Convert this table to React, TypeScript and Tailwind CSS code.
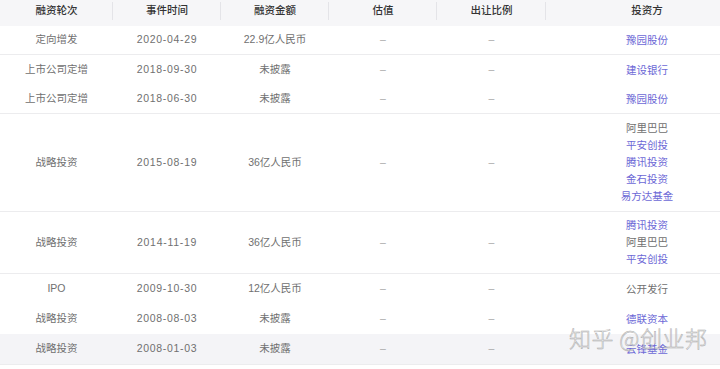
import React from 'react';

type Investor = { name: string; link: boolean };

type Round = {
  stage: string;
  date: string;
  amount: string;
  investors: Investor[];
  height: string;
  divider: boolean;
  hover?: boolean;
};

const rounds: Round[] = [
  { stage: '定向增发', date: '2020-04-29', amount: '22.9亿人民币', investors: [{ name: '豫园股份', link: true }], height: 'h-[29px]', divider: true },
  { stage: '上市公司定增', date: '2018-09-30', amount: '未披露', investors: [{ name: '建设银行', link: true }], height: 'h-[30px]', divider: false },
  { stage: '上市公司定增', date: '2018-06-30', amount: '未披露', investors: [{ name: '豫园股份', link: true }], height: 'h-[29px]', divider: true },
  {
    stage: '战略投资',
    date: '2015-08-19',
    amount: '36亿人民币',
    investors: [
      { name: '阿里巴巴', link: false },
      { name: '平安创投', link: true },
      { name: '腾讯投资', link: true },
      { name: '金石投资', link: true },
      { name: '易方达基金', link: true },
    ],
    height: 'h-[98px]',
    divider: true,
  },
  {
    stage: '战略投资',
    date: '2014-11-19',
    amount: '36亿人民币',
    investors: [
      { name: '腾讯投资', link: true },
      { name: '阿里巴巴', link: false },
      { name: '平安创投', link: true },
    ],
    height: 'h-[62px]',
    divider: true,
  },
  { stage: 'IPO', date: '2009-10-30', amount: '12亿人民币', investors: [{ name: '公开发行', link: false }], height: 'h-[30px]', divider: false },
  { stage: '战略投资', date: '2008-08-03', amount: '未披露', investors: [{ name: '德联资本', link: true }], height: 'h-[30px]', divider: false },
  { stage: '战略投资', date: '2008-01-03', amount: '未披露', investors: [{ name: '云锋基金', link: true }], height: 'h-[31px]', divider: true, hover: true },
];

const cols = 'grid grid-cols-[113px_108px_108px_108px_109px_202px]';
const headers = ['融资轮次', '事件时间', '融资金额', '估值', '出让比例', '投资方'];

export default function App() {
  return (
    <div className="relative w-[720px] h-[369px] overflow-hidden bg-white font-['Liberation_Sans','Noto_Sans_CJK_SC',sans-serif] text-[10.5px]">
      <div className="w-[748px]">
        {/* header */}
        <div className={`${cols} h-[26px] bg-[#f6f6f8] text-[#333] font-medium`}>
          {headers.map((h, i) => (
            <div key={h} className="relative flex items-center justify-center pb-[4px]">
              {h}
              {i < headers.length - 1 && (
                <span className="absolute right-0 top-[2px] bottom-[6px] w-px bg-[#e4e4e8]" />
              )}
            </div>
          ))}
        </div>

        {rounds.map((r, i) => (
          <div
            key={i}
            className={`${cols} ${r.height} ${r.divider ? 'border-b border-[#ececee]' : ''} ${r.hover ? 'bg-[#f4f4f7]' : ''} text-[#707070]`}
          >
            <div className="flex items-center justify-center">{r.stage}</div>
            <div className="flex items-center justify-center tracking-[0.7px]">{r.date}</div>
            <div className="flex items-center justify-center">{r.amount}</div>
            <div className="flex items-center justify-center text-[#aaa]">–</div>
            <div className="flex items-center justify-center text-[#aaa]">–</div>
            <div className="flex flex-col items-center justify-center leading-[17px]">
              {r.investors.map((inv) => (
                <span key={inv.name} className={inv.link ? 'text-[#6c68d6]' : 'text-[#707070]'}>
                  {inv.name}
                </span>
              ))}
            </div>
          </div>
        ))}
      </div>

      {/* watermark */}
      <div className="absolute left-[569px] top-[326px] text-[22px] leading-none tracking-[0.5px] text-white/50 [-webkit-text-stroke:0.5px_#a8a8a8] font-['Noto_Sans_CJK_SC',sans-serif] font-light pointer-events-none whitespace-nowrap">
        知乎 @创业邦
      </div>
    </div>
  );
}
